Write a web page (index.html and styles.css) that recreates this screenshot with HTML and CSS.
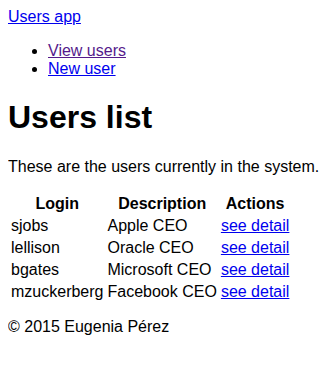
FILE: index.html
```html
<!DOCTYPE html>
<html lang="en">
<head>
    <meta charset="UTF-8">
    <title>Users app</title>
    <link rel="stylesheet" href="styles.css">
</head>
<body>
    <header>
        <a href="#">Users app</a>
        <ul>
            <li><a href="#" class="visited">View users</a></li>
            <li><a href="#">New user</a></li>
        </ul>
    </header>
    <h1>Users list</h1>
    <p>These are the users currently in the system.</p>
    <table>
        <tr>
            <th>Login</th>
            <th>Description</th>
            <th>Actions</th>
        </tr>
        <tr>
            <td>sjobs</td>
            <td>Apple CEO</td>
            <td><a href="#">see detail</a></td>
        </tr>
        <tr>
            <td>lellison</td>
            <td>Oracle CEO</td>
            <td><a href="#">see detail</a></td>
        </tr>
        <tr>
            <td>bgates</td>
            <td>Microsoft CEO</td>
            <td><a href="#">see detail</a></td>
        </tr>
        <tr>
            <td>mzuckerberg</td>
            <td>Facebook CEO</td>
            <td><a href="#">see detail</a></td>
        </tr>
    </table>
    <footer>
        <p>&copy; 2015 Eugenia P&eacute;rez</p>
    </footer>
</body>
</html>
```

FILE: styles.css
```css
body {
    font-family: "Liberation Sans", Arial, sans-serif;
    font-size: 16px;
    color: #000;
}
a {
    color: #0000ee;
}
a.visited {
    color: #551a8b;
}
footer p {
    margin-top: 14px;
}
```
